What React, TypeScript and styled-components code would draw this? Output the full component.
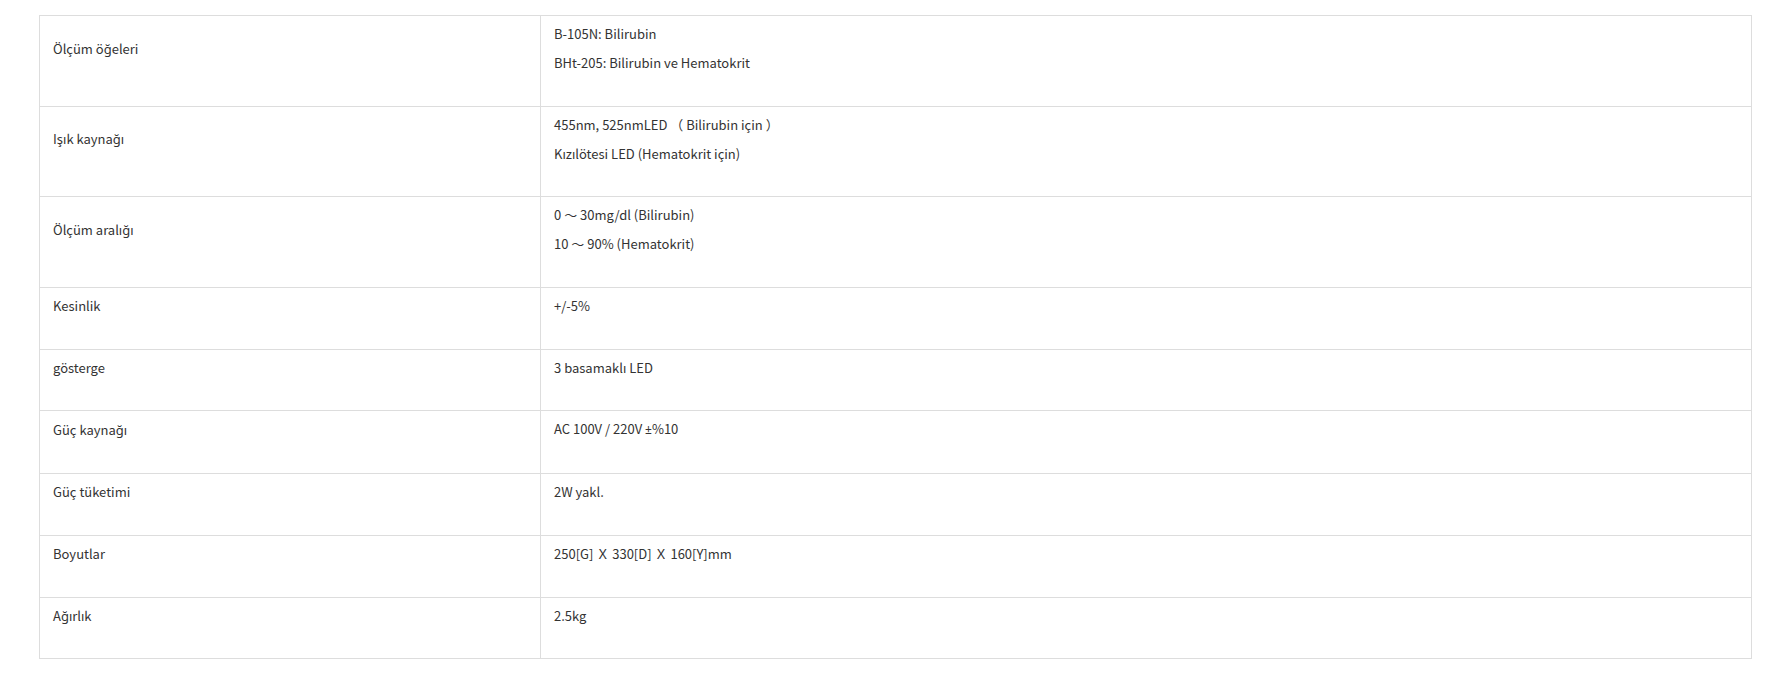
import React from "react";
import styled, { createGlobalStyle } from "styled-components";

const GlobalStyle = createGlobalStyle`
  body {
    margin: 0;
    background: #fff;
    font-family: "Noto Sans CJK KR", "Noto Sans", sans-serif;
    color: #333;
  }
`;

const Table = styled.div`
  margin: 15px 27px 0 39px;
  border: 1px solid #ddd;
  border-bottom: none;
`;

const Row = styled.div`
  display: grid;
  grid-template-columns: 501px 1fr;
  border-bottom: 1px solid #ddd;
`;

const Cell = styled.div`
  padding: 8px 13px 32.7px;
  font-size: 13px;
`;

const LabelCell = styled(Cell)`
  display: flex;
  align-items: center;
  border-right: 1px solid #ddd;
`;

const ValueCell = styled(Cell)``;

const Lines = styled.div`
  display: flex;
  flex-direction: column;
  gap: 9px;
`;

const Line = styled.div`
  line-height: 20px;
  white-space: pre;
`;

const Latin = styled.span`
  font-family: "Noto Sans", sans-serif;
  font-size: 12px;
`;

const specs: { label: string; values: React.ReactNode[] }[] = [
  { label: "Ölçüm öğeleri", values: ["B-105N: Bilirubin", "BHt-205: Bilirubin ve Hematokrit"] },
  { label: "Işık kaynağı", values: ["455nm, 525nmLED （ Bilirubin için ）", "Kızılötesi LED (Hematokrit için)"] },
  { label: "Ölçüm aralığı", values: ["0 ～ 30mg/dl (Bilirubin)", "10 ～ 90% (Hematokrit)"] },
  { label: "Kesinlik", values: ["+/-5%"] },
  { label: "gösterge", values: ["3 basamaklı LED"] },
  {
    label: "Güç kaynağı",
    values: [
      <>
        AC 100V / 220V <Latin>±</Latin>%10
      </>,
    ],
  },
  { label: "Güç tüketimi", values: ["2W yakl."] },
  { label: "Boyutlar", values: ["250[G] Ｘ 330[D] Ｘ 160[Y]mm"] },
  { label: "Ağırlık", values: ["2.5kg"] },
];

const App = () => {
  return (
    <>
      <GlobalStyle />
      <Table>
        {specs.map((spec) => (
          <Row key={spec.label}>
            <LabelCell>
              <Line>{spec.label}</Line>
            </LabelCell>
            <ValueCell>
              <Lines>
                {spec.values.map((v, i) => (
                  <Line key={i}>{v}</Line>
                ))}
              </Lines>
            </ValueCell>
          </Row>
        ))}
      </Table>
    </>
  );
};

export default App;
